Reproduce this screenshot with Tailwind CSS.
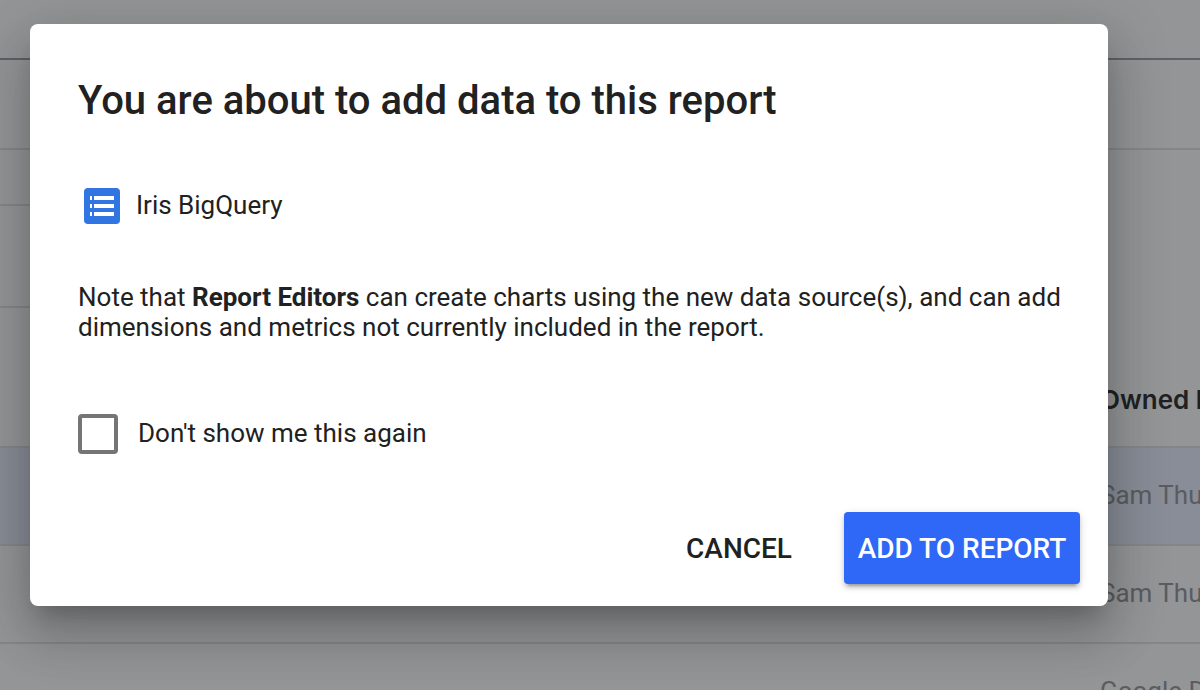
<!DOCTYPE html>
<html lang="en">
<head>
<meta charset="utf-8">
<meta name="viewport" content="width=device-width, initial-scale=1">
<title>Add data to report</title>
<script src="https://cdn.jsdelivr.net/npm/@tailwindcss/browser@4"></script>
</head>
<body class="relative h-screen overflow-hidden bg-[#949596] font-[Roboto,sans-serif] text-[#212121]">
  <!-- Page behind the dialog, already dimmed -->
  <div class="flex h-full flex-col overflow-hidden" aria-hidden="true">
    <div class="h-[60px] shrink-0 border-b-2 border-[#5f6168]"></div>
    <div class="h-[90px] shrink-0 border-b-2 border-[#858687]"></div>
    <div class="flex h-[298px] shrink-0 border-b-2 border-[#858687]">
      <div class="w-16">
        <div class="h-14 border-b-2 border-[#858687]"></div>
        <div class="h-[102px] border-b-2 border-[#858687]"></div>
      </div>
      <div class="ml-auto flex w-[100px] items-end whitespace-nowrap pb-7 font-[Inter,sans-serif] text-[26px] leading-9 font-semibold text-[#202124]">Owned by</div>
    </div>
    <div class="flex h-[98px] shrink-0 items-center justify-end border-b-2 border-[#858687] bg-[#888d97] pb-0.5"><span class="w-[100px] whitespace-nowrap text-[26px] text-[#5a5c5f]">Sam Thurman</span></div>
    <div class="flex h-[98px] shrink-0 items-center justify-end border-b-2 border-[#858687] pb-0.5"><span class="w-[100px] whitespace-nowrap text-[26px] text-[#5a5c5f]">Sam Thurman</span></div>
    <div class="flex h-[98px] shrink-0 items-center justify-end pb-1"><span class="w-[100px] whitespace-nowrap text-[26px] text-[#5a5c5f]">Google Data</span></div>
  </div>

  <div class="absolute inset-0 pt-6 pr-[92px] pl-[30px]">
    <main role="dialog" aria-labelledby="title" class="rounded-lg bg-white pt-[49px] pr-10 pb-[22px] pl-12 shadow-[0_16px_20px_-10px_rgba(0,0,0,0.2),0_32px_48px_4px_rgba(0,0,0,0.14),0_12px_60px_10px_rgba(0,0,0,0.12)]">
      <h1 id="title" class="text-[40px] leading-[56px] font-medium">You are about to add data to this report</h1>
      <div class="mt-[58px] flex items-center gap-4 pl-1.5 text-[26px] leading-9">
        <svg class="size-9" viewBox="0 0 36 36" aria-hidden="true"><rect width="36" height="36" rx="4" fill="#3075e2"/><path fill="#fff" d="M6 8h2v4H6zM10 8h20v4H10zM6 16h2v4H6zM10 16h20v4H10zM6 24h2v4H6zM10 24h20v4H10z"/></svg>
        <span class="pb-0.5">Iris BigQuery</span>
      </div>
      <p class="mt-[57px] text-[26px] leading-[30px]">Note that <strong class="font-bold">Report Editors</strong> can create charts using the new data source(s), and can add dimensions and metrics not currently included in the report.</p>
      <label class="mt-[72px] flex w-fit items-center gap-5 text-[26px] leading-9">
        <input type="checkbox" class="size-10 appearance-none rounded border-4 border-[#757575] bg-white checked:bg-[#2f67f6]">
        <span class="pb-0.5">Don't show me this again</span>
      </label>
      <div class="-mr-3 mt-[58px] flex justify-end gap-10 text-[28px] leading-[70px] font-medium">
        <button type="button" class="px-3 pt-0.5">CANCEL</button>
        <button type="button" class="min-w-[236px] rounded bg-[#2f67f6] px-3 pt-0.5 text-white shadow-[0_6px_2px_-4px_rgba(0,0,0,0.2),0_4px_4px_0_rgba(0,0,0,0.14),0_2px_10px_0_rgba(0,0,0,0.12)]">ADD TO REPORT</button>
      </div>
    </main>
  </div>
</body>
</html>
